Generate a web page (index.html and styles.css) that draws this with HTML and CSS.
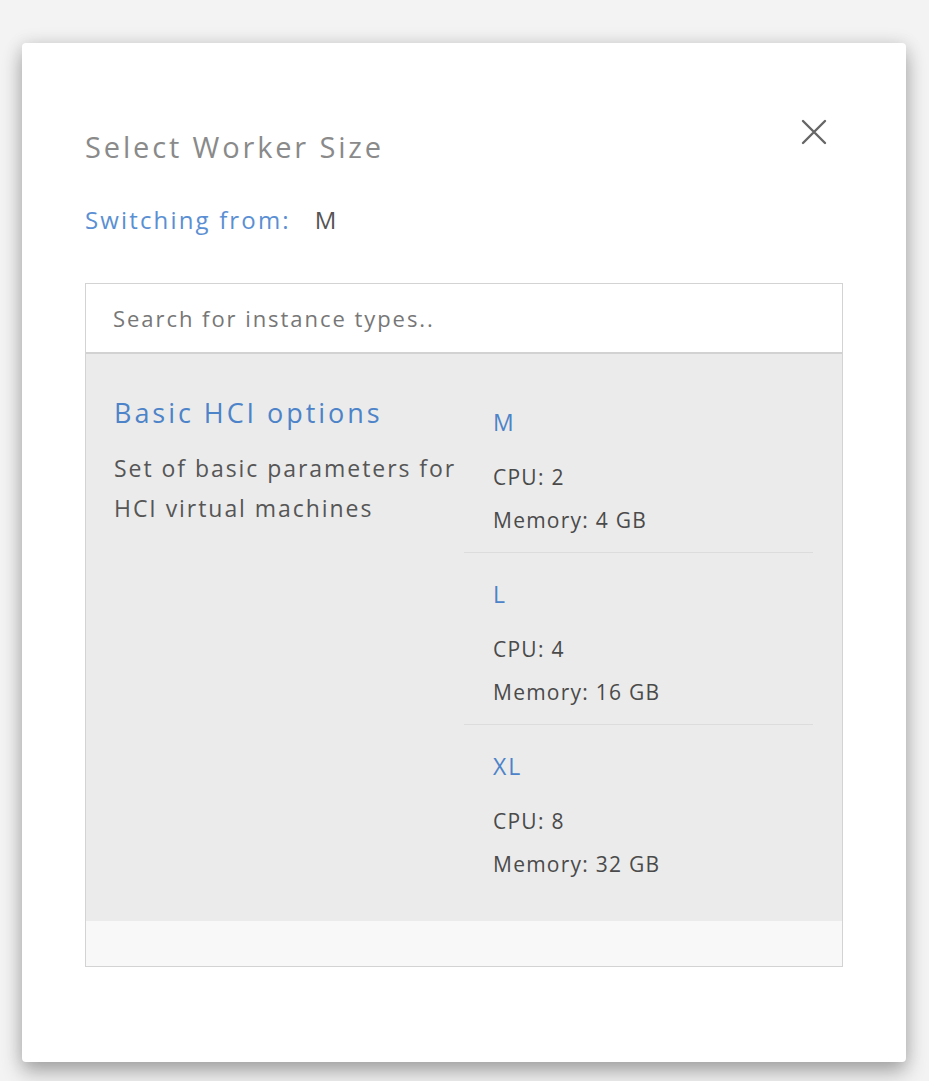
FILE: index.html
```html
<!DOCTYPE html>
<html>
<head>
<meta charset="utf-8">
<link rel="stylesheet" href="styles.css">
</head>
<body>
<div class="page">
  <div class="modal">
    <div class="modal-header">
      <h2 class="modal-title">Select Worker Size</h2>
      <button class="close-btn" aria-label="Close">
        <svg width="26" height="26" viewBox="0 0 26 26"><path d="M2 2 L24 24 M24 2 L2 24" stroke="#666" stroke-width="2.4" stroke-linecap="round" fill="none"/></svg>
      </button>
    </div>
    <div class="switching"><span class="switch-label">Switching from:</span><span class="switch-value">M</span></div>
    <div class="picker">
      <div class="search">Search for instance types..</div>
      <div class="options">
        <div class="group">
          <div class="group-info">
            <div class="group-title">Basic HCI options</div>
            <div class="group-desc">Set of basic parameters for HCI virtual machines</div>
          </div>
          <div class="sizes">
            <div class="size">
              <div class="size-name">M</div>
              <div class="size-spec">CPU: 2</div>
              <div class="size-spec">Memory: 4 GB</div>
            </div>
            <div class="size">
              <div class="size-name">L</div>
              <div class="size-spec">CPU: 4</div>
              <div class="size-spec">Memory: 16 GB</div>
            </div>
            <div class="size">
              <div class="size-name">XL</div>
              <div class="size-spec">CPU: 8</div>
              <div class="size-spec">Memory: 32 GB</div>
            </div>
          </div>
        </div>
      </div>
      <div class="picker-footer"></div>
    </div>
  </div>
</div>
</body>
</html>
```
FILE: styles.css
```css
* { box-sizing: border-box; }
html, body { margin: 0; padding: 0; }
body {
  background: #f3f3f3;
  font-family: "Open Sans", "Liberation Sans", sans-serif;
  width: 929px;
  height: 1081px;
  overflow: hidden;
}
.page {
  padding: 43px 23px 0 22px;
}
.modal {
  width: 884px;
  height: 1019px;
  background: #fff;
  border-radius: 4px;
  box-shadow: 0 10px 20px rgba(0,0,0,0.30), 0 0 18px rgba(0,0,0,0.10);
  padding: 80px 63px 0 63px;
}
.modal-header {
  display: flex;
  justify-content: space-between;
  align-items: flex-start;
}
.modal-title {
  margin: 0;
  font-weight: 400;
  font-size: 29px;
  line-height: 48px;
  color: #8a8a8a;
  letter-spacing: 2.85px;
}
.close-btn {
  border: 0;
  background: none;
  padding: 0;
  margin: -4px 16px 0 0;
  width: 26px;
  height: 26px;
  display: flex;
}
.switching {
  margin-top: 31px;
  line-height: 36px;
  font-size: 24px;
  letter-spacing: 2.15px;
}
.switch-label { color: #5b8fd3; }
.switch-value { color: #555; margin-left: 24px; }
.picker {
  margin-top: 45px;
  border: 1px solid #d3d3d3;
}
.search {
  height: 70px;
  border-bottom: 2px solid #d2d2d2;
  padding: 0 27px;
  line-height: 68px;
  font-size: 22px;
  letter-spacing: 1.95px;
  color: #777;
}
.options {
  background: #ebebeb;
  padding: 27px 29px 25px 28px;
}
.group {
  display: flex;
}
.group-info {
  width: 350px;
  padding-right: 6px;
}
.group-title {
  margin-top: 10px;
  line-height: 44px;
  font-size: 27px;
  letter-spacing: 2.95px;
  color: #4d83c8;
}
.group-desc {
  margin-top: 13px;
  line-height: 40px;
  font-size: 23px;
  letter-spacing: 1.95px;
  color: #565656;
}
.sizes {
  flex: 1;
}
.size {
  padding: 20px 29px 10px;
  border-bottom: 1px solid #dcdcdc;
}
.size:last-child { border-bottom: 0; }
.size-name {
  line-height: 42px;
  font-size: 23px;
  letter-spacing: 2px;
  color: #4d83c8;
  margin-bottom: 13px;
}
.size-spec {
  line-height: 43px;
  font-size: 21px;
  letter-spacing: 1.25px;
  color: #4a4a4a;
}
.picker-footer {
  height: 45px;
  background: #f8f8f8;
}
```
